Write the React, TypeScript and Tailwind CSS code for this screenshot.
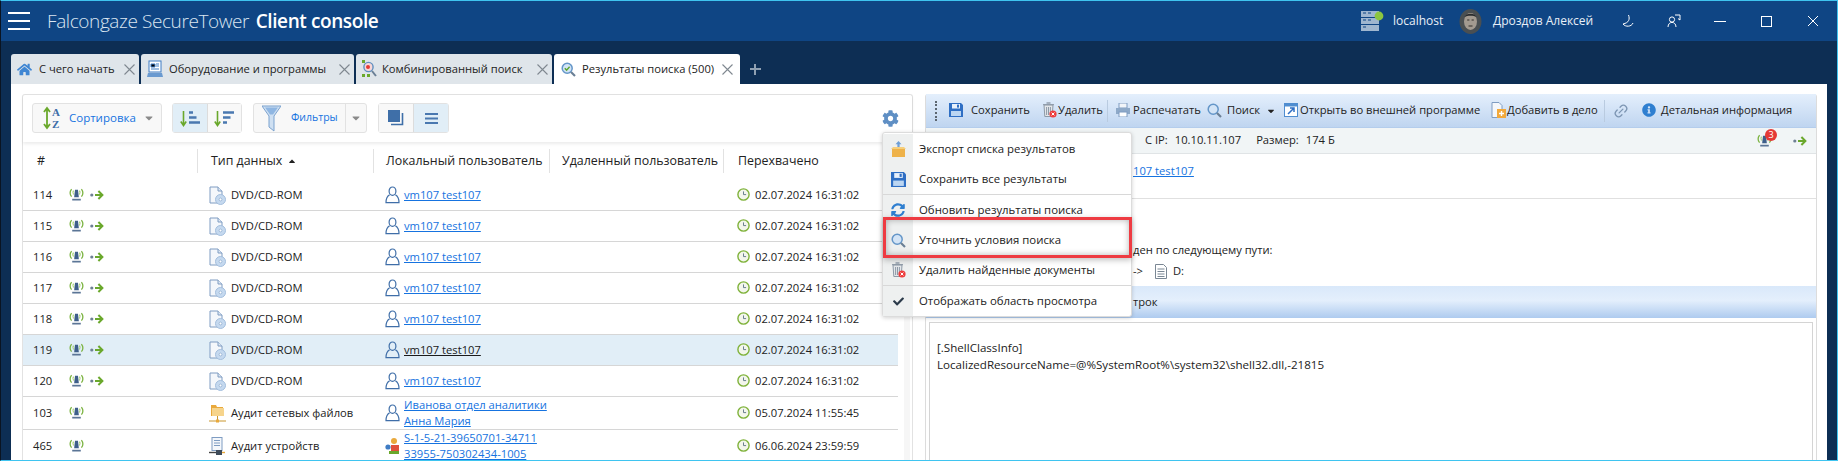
import React from 'react';
import { FaCog, FaHome, FaSyncAlt, FaCheck, FaInfoCircle, FaCaretDown, FaCaretUp } from 'react-icons/fa';
import { Link2 } from 'lucide-react';

const Beacon = () => (
  <svg width="15" height="15" viewBox="0 0 14 14" fill="none">
    <path d="M2.4 2C.7 4.2.7 6.8 2.4 9M11.6 2c1.7 2.2 1.7 4.8 0 7" stroke="#7cb342" strokeWidth="1.2" />
    <path d="M4.2 3.4C3.5 4.4 3.5 6 4.2 7M9.8 3.4c.7 1 .7 2.6 0 3.6" stroke="#9ccc65" strokeWidth="1" />
    <path d="M5.6 2.5h2.8l.8 7H4.8z" fill="#3e5f8a" />
    <rect x="3" y="11" width="8" height="1.6" fill="#5b7596" />
  </svg>
);

const DotArrow = () => (
  <svg width="14" height="12" viewBox="0 0 14 12" fill="none">
    <circle cx="1.8" cy="6" r="1.6" fill="#6d7f94" />
    <path d="M5 6h7M8.4 2l4 4-4 4" stroke="#6aa82c" strokeWidth="2" />
  </svg>
);

const DiscDoc = () => (
  <svg width="17" height="19" viewBox="0 0 17 19" fill="none">
    <path d="M1 1h8l4 4v12H1z" fill="#f4f7fb" stroke="#7e9cc2" />
    <path d="M9 1v4h4" stroke="#7e9cc2" fill="#dfe8f3" />
    <circle cx="11.5" cy="13.5" r="5" fill="#c5d9ef" stroke="#a3bedd" />
    <circle cx="11.5" cy="13.5" r="1.4" fill="#fff" stroke="#86a6cb" strokeWidth=".7" />
  </svg>
);

const UserIcon = () => (
  <svg width="15" height="18" viewBox="0 0 15 18" fill="none" stroke="#3f6ea8" strokeWidth="1.2">
    <ellipse cx="7.5" cy="5.2" rx="3.4" ry="4.2" />
    <path d="M4.6 8.8C2.4 10 1 12.2 1 16.6h13c0-4.4-1.4-6.6-3.6-7.8" />
  </svg>
);

const Clock = () => (
  <svg width="13" height="13" viewBox="0 0 13 13" fill="none">
    <circle cx="6.5" cy="6.5" r="5.6" fill="#f3f6ec" stroke="#7fb23a" strokeWidth="1.4" />
    <path d="M6.5 3.4v3.2h2.6" stroke="#6a7f8f" strokeWidth="1" />
  </svg>
);

const Floppy = ({ size = 14 }: { size?: number }) => (
  <svg width={size} height={size} viewBox="0 0 14 14">
    <path d="M0 0h12l2 2v12H0z" fill="#2f6fc4" />
    <rect x="3" y="1" width="8" height="4.5" fill="#e8f1fb" />
    <rect x="8" y="1.6" width="2" height="3" fill="#2f6fc4" />
    <rect x="2" y="8" width="10" height="5" fill="#bcd6f2" />
  </svg>
);

const TrashX = () => (
  <svg width="15" height="16" viewBox="0 0 15 16" fill="none">
    <path d="M2 3h9l-.8 11.5H2.8z" fill="#e4e7ea" stroke="#8d99a6" />
    <path d="M1 2.6h11M4.6 5v8M6.5 5v8M8.4 5v8" stroke="#8d99a6" />
    <path d="M4.5 1h4" stroke="#8d99a6" strokeWidth="1.4" />
    <circle cx="11" cy="12" r="3.6" fill="#ee3d3d" />
    <path d="M9.6 10.6l2.8 2.8M12.4 10.6l-2.8 2.8" stroke="#fff" strokeWidth="1" />
  </svg>
);

const Magnifier = ({ check = false }: { check?: boolean }) => (
  <svg width="15" height="15" viewBox="0 0 15 15" fill="none">
    <circle cx="6.2" cy="6.2" r="5" fill="#d3e4f6" stroke="#6496c8" strokeWidth="1.5" />
    <path d="M10 10l4 4" stroke="#6a7f95" strokeWidth="2.2" />
    {check && <path d="M3.8 6.2l1.8 1.9 3-3.4" stroke="#5aa62e" strokeWidth="1.4" />}
  </svg>
);

const BoxUp = () => (
  <svg width="15" height="17" viewBox="0 0 15 17">
    <path d="M7.5 0l3 3.2H8.6V8H6.4V3.2H4.5z" fill="#6f9fd6" />
    <path d="M0 8l2-2h11l2 2z" fill="#f6cf7c" />
    <rect x="1" y="8" width="13" height="8" fill="#eeb24a" />
  </svg>
);

const SortAZ = () => (
  <svg width="18" height="24" viewBox="0 0 18 24" fill="none">
    <path d="M4 3v18M1 6l3-4 3 4M1 18l3 4 3-4" stroke="#6aa82c" strokeWidth="1.8" />
    <text x="9" y="10" fontSize="11" fontWeight="700" fontFamily="'Liberation Serif', serif" fill="#3d6ea8">A</text>
    <text x="9" y="22" fontSize="11" fontWeight="700" fontFamily="'Liberation Serif', serif" fill="#3d6ea8">Z</text>
  </svg>
);

const OrderIcon = ({ reverse = false }: { reverse?: boolean }) => (
  <svg width="21" height="19" viewBox="0 0 21 19" fill="none">
    <path d="M3.5 2v14M.8 12.5l2.7 4 2.7-4" stroke="#6aa82c" strokeWidth="1.6" />
    {reverse ? (
      <path d="M9 3.5h11M9 8.5h7.5M9 13.5h4" stroke="#4a78b0" strokeWidth="2.6" />
    ) : (
      <path d="M9 3.5h4M9 8.5h7.5M9 13.5h11" stroke="#4a78b0" strokeWidth="2.6" />
    )}
  </svg>
);

const Funnel = () => (
  <svg width="19" height="27" viewBox="0 0 19 27">
    <path d="M0 1h19l-7 10v15l-5-4V11z" fill="#cfe0f2" stroke="#7ba2cf" />
    <path d="M3 2.5h13l-5 7H8z" fill="#8fb6e2" />
  </svg>
);

const Tool = ({ icon, label, className, labelClass }: { icon: React.ReactNode; label: string; className: string; labelClass: string }) => (
  <div className={`flex items-center shrink-0 ${className}`}>
    {icon}
    <span className={`whitespace-nowrap ${labelClass}`}>{label}</span>
  </div>
);

const tabs = [
  { label: 'С чего начать', width: 'w-[128px]', icon: <FaHome size={15} color="#3f86d3" />, text: 'ml-[7px]' },
  { label: 'Оборудование и программы', width: 'w-[213px]', icon: <svg width="16" height="18" viewBox="0 0 16 18"><rect x="2" y="1" width="12" height="11" fill="#fff" stroke="#3f7cc4" /><path d="M4 4h4v3H4zM9 4h3M9 6h3M4 9h8" stroke="#3f7cc4" /><path d="M1 13h14l1 4H0z" fill="#6a9ad0" /></svg>, text: 'ml-[6px]' },
  { label: 'Комбинированный поиск', width: 'w-[196px]', icon: <svg width="15" height="18" viewBox="0 0 15 18" fill="none"><rect x="0" y="0" width="3" height="3" fill="#6aa82c" /><rect x="0" y="14" width="3" height="3" fill="#6aa82c" /><rect x="5" y="14" width="3" height="3" fill="#6aa82c" /><circle cx="6.5" cy="7" r="4.6" fill="#f7d7d7" stroke="#5f8fc0" strokeWidth="1.4" /><circle cx="6" cy="7" r="2" fill="#e53935" /><path d="M10 11l4 5" stroke="#6a7f95" strokeWidth="2" /></svg>, text: 'ml-[5px]' },
];

const rows = [
  { id: 114 }, { id: 115 }, { id: 116 }, { id: 117 }, { id: 118 }, { id: 119, active: true }, { id: 120 },
];

const menu = [
  { label: 'Экспорт списка результатов', icon: <BoxUp /> },
  { label: 'Сохранить все результаты', icon: <Floppy size={15} /> },
  { label: 'Обновить результаты поиска', icon: <FaSyncAlt size={14} color="#2f7fd0" />, sep: true },
  { label: 'Уточнить условия поиска', icon: <Magnifier /> },
  { label: 'Удалить найденные документы', icon: <TrashX /> },
  { label: 'Отображать область просмотра', icon: <FaCheck size={11} color="#2b3a4a" />, sep: true },
];

const Row = ({ num, active, h, arrow, typeIcon, type, userIcon, user, date }: {
  num: number; active?: boolean; h: string; arrow?: boolean; typeIcon: React.ReactNode; type: string;
  userIcon: React.ReactNode; user: React.ReactNode; date: string;
}) => (
  <div className={`flex items-center border-b border-[#d6d6d6] ${h} ${active ? 'bg-[#e1eef7]' : ''}`}>
    <div className="w-[174px] pl-[10px] flex items-center">
      <span className="w-[36px]">{num}</span>
      <Beacon />
      {arrow && <span className="ml-[6px] flex"><DotArrow /></span>}
    </div>
    <div className="w-[176px] pl-[12px] flex items-center gap-[5px]">
      {typeIcon}
      <span>{type}</span>
    </div>
    <div className="w-[350px] pl-[12px] flex items-center gap-[4px]">
      {userIcon}
      <span className={`underline leading-[16px] ${active ? 'text-[#1a1a1a]' : 'text-[#1673e0]'}`}>{user}</span>
    </div>
    <div className="pl-[14px] flex items-center gap-[5px]">
      <Clock />
      <span>{date}</span>
    </div>
  </div>
);

export default function App() {
  return (
    <div className="relative w-[1838px] h-[461px] overflow-hidden flex flex-col bg-[#0d2e54] border-t border-b border-r border-l border-t-[#3fc4f0] border-b-[#3fc4f0] border-r-[#3fc4f0] border-l-[#0a1422] font-['Open_Sans',sans-serif] text-[11.2px] text-[#222]">
      {/* Title bar */}
      <header className="h-[40px] shrink-0 bg-[#0f4584] flex items-center text-white">
        <div className="ml-[7px] w-[22px] flex flex-col gap-[6px]">
          <div className="h-[2px] bg-white" />
          <div className="h-[2px] bg-white" />
          <div className="h-[2px] bg-white" />
        </div>
        <h1 className="ml-[17px] text-[19px] font-light tracking-[-0.4px] text-[#dbe6f2] whitespace-nowrap">
          Falcongaze SecureTower <span className="font-semibold text-white ml-[2px]">Client console</span>
        </h1>
        <div className="ml-auto flex items-center text-[12px] text-[#e8eff7]">
          <svg width="23" height="22" viewBox="0 0 23 22">
            <rect x="0" y="1" width="18" height="6" fill="#9fb6cf" />
            <rect x="0" y="8" width="18" height="6" fill="#9fb6cf" />
            <rect x="0" y="15" width="18" height="6" fill="#9fb6cf" />
            <path d="M2 3h3M7 3h3M2 10h3M7 10h3M2 17h3" stroke="#0f4584" strokeWidth="1.2" />
            <circle cx="18" cy="6" r="4.4" fill="#8cc63f" />
          </svg>
          <span className="ml-[9px] w-[48px]">localhost</span>
          <svg className="ml-[18px]" width="23" height="25" viewBox="0 0 23 25">
            <ellipse cx="11.5" cy="12.5" rx="11" ry="12.5" fill="#4a4f52" />
            <ellipse cx="11.5" cy="12.5" rx="6.5" ry="8.5" fill="#a39a90" />
            <path d="M5.5 8c1-4.5 11-4.5 12 0-3-1.6-9-1.6-12 0z" fill="#2a2c2e" />
            <path d="M8.2 11h2.2M12.6 11h2.2M9.5 17h4" stroke="#332e2b" />
          </svg>
          <span className="ml-[11px] w-[96px] whitespace-nowrap">Дроздов Алексей</span>
          <svg className="ml-[33px]" width="12" height="14" viewBox="0 0 12 14" fill="none" stroke="#fff"><path d="M6.5 1c1.6 4.2.4 7.800-5.500 9 2.500 3.300 8.500 2.800 10-1" /></svg>
          <svg className="ml-[33px]" width="14" height="14" viewBox="0 0 14 14" fill="none" stroke="#fff"><circle cx="5" cy="5.5" r="2.6" /><path d="M1 13c0-3 2-4.6 4-4.6s4 1.600 4 4.600M8 1h5v5l-2-1.400" /></svg>
          <div className="ml-[33px] w-[12px] h-px bg-white" />
          <div className="ml-[35px] w-[11px] h-[11px] border border-white" />
          <svg className="ml-[35px] mr-[18px]" width="12" height="12" viewBox="0 0 12 12" stroke="#fff"><path d="M1 1l10 10M11 1L1 11" /></svg>
        </div>
      </header>

      {/* Tabs */}
      <nav className="h-[43px] shrink-0 pt-[13px] pl-[10px] flex items-stretch gap-[2px]">
        {tabs.map((t) => (
          <div key={t.label} className={`flex items-center bg-[#dfe5ea] rounded-t-[3px] pl-[6px] pr-[4px] ${t.width}`}>
            {t.icon}
            <span className={`${t.text} whitespace-nowrap`}>{t.label}</span>
            <svg className="ml-auto" width="11" height="11" viewBox="0 0 11 11" stroke="#7f8890" strokeWidth="1.1"><path d="M.5.5l10 10M10.5.5l-10 10" /></svg>
          </div>
        ))}
        <div className="flex items-center bg-white rounded-t-[3px] w-[186px] pl-[7px] pr-[7px]">
          <Magnifier check />
          <span className="ml-[6px] whitespace-nowrap">Результаты поиска (500)</span>
          <svg className="ml-auto" width="11" height="11" viewBox="0 0 11 11" stroke="#7f8890" strokeWidth="1.1"><path d="M.5.5l10 10M10.5.5l-10 10" /></svg>
        </div>
        <div className="ml-[8px] self-center w-[11px] h-[11px] relative">
          <div className="absolute left-[4px] top-0 w-[2px] h-[11px] bg-[#8fa0b2]" />
          <div className="absolute left-0 top-[4px] w-[11px] h-[2px] bg-[#8fa0b2]" />
        </div>
      </nav>

      {/* Content */}
      <div className="flex-1 min-h-0 ml-[10px] mr-[10px] bg-white pt-[10px] pl-[11px] flex gap-[12px] relative">
        <section className="w-[891px] border-t border-l border-r border-[#e2e2e2] rounded-t-[3px] flex flex-col">
          <div className="h-[47px] shrink-0 shadow-[0_2px_3px_rgba(0,0,0,0.08)] pt-[8px] pl-[9px] pr-[13px] flex items-start">
            <div className="h-[30px] w-[130px] border border-[#e2e2e2] rounded-[3px] bg-[#f8f8f8] flex items-center pl-[10px] text-[#1673e0]">
              <SortAZ />
              <span className="ml-[8px] text-[11.5px]">Сортировка</span>
              <FaCaretDown className="ml-auto mr-[6px]" size={12} color="#8a8a8a" />
            </div>
            <div className="ml-[10px] h-[30px] w-[70px] border border-[#e2e2e2] rounded-[3px] flex">
              <div className="w-[35px] bg-[#e1eef7] border-r border-[#dcdcdc] flex items-center justify-center"><OrderIcon /></div>
              <div className="flex-1 bg-[#f8f8f8] flex items-center justify-center"><OrderIcon reverse /></div>
            </div>
            <div className="ml-[11px] h-[30px] w-[114px] border border-[#e2e2e2] rounded-[3px] flex bg-[#f8f8f8]">
              <div className="w-[92px] border-r border-[#e2e2e2] flex items-center pl-[8px] text-[#1673e0]">
                <Funnel />
                <span className="ml-[10px] text-[10.5px]">Фильтры</span>
              </div>
              <div className="flex-1 flex items-center justify-center"><FaCaretDown size={12} color="#8a8a8a" /></div>
            </div>
            <div className="ml-[11px] h-[30px] w-[71px] border border-[#e2e2e2] rounded-[3px] flex">
              <div className="w-[35px] bg-[#f8f8f8] border-r border-[#dcdcdc] flex items-center justify-center">
                <svg width="16" height="16" viewBox="0 0 16 16"><rect x="0" y="0" width="12" height="12" fill="#3f6fa8" /><path d="M14.5 3v11.5H3" fill="none" stroke="#3f6fa8" strokeWidth="1.6" /></svg>
              </div>
              <div className="flex-1 bg-[#e1eef7] flex items-center justify-center">
                <svg width="13" height="13" viewBox="0 0 13 13"><path d="M0 2h13M0 6.5h13M0 11h13" stroke="#4a78b0" strokeWidth="2" /></svg>
              </div>
            </div>
            <FaCog className="ml-auto mt-[7px]" size={17} color="#5f8fc4" />
          </div>

          <div className="flex h-[38px] shrink-0 items-center text-[12.4px] text-[#222] w-[875px]">
            <div className="w-[174px] pl-[14px]">#</div>
            <div className="w-[176px] h-[24px] border-l border-[#e2e2e2] pl-[13px] flex items-center gap-[5px]">
              Тип данных <FaCaretUp size={10} color="#222" />
            </div>
            <div className="w-[176px] h-[24px] border-l border-[#e2e2e2] pl-[12px] flex items-center whitespace-nowrap">Локальный пользователь</div>
            <div className="w-[174px] h-[24px] border-l border-[#e2e2e2] pl-[12px] flex items-center whitespace-nowrap">Удаленный пользователь</div>
            <div className="flex-1 h-[24px] border-l border-[#e2e2e2] pl-[14px] flex items-center">Перехвачено</div>
          </div>

          <div className="flex flex-1 min-h-0">
            <div className="w-[875px] shrink-0">
              {rows.map((r) => (
                <Row key={r.id} num={r.id} active={r.active} h="h-[31px]" arrow typeIcon={<DiscDoc />} type="DVD/CD-ROM" userIcon={<UserIcon />} user="vm107 test107" date="02.07.2024 16:31:02" />
              ))}
              <Row
                num={103}
                h="h-[33px]"
                typeIcon={
                  <svg width="17" height="19" viewBox="0 0 17 19"><path d="M2 1h5l1 2h6v9H2z" fill="#e9a93c" /><rect x="3" y="4" width="12" height="8" fill="#f6d48c" /><path d="M0 17h17M8.500 12v5" stroke="#c9962f" /><rect x="7" y="15.500" width="3" height="3" fill="#e9a93c" /></svg>
                }
                type="Аудит сетевых файлов"
                userIcon={<UserIcon />}
                user={<>Иванова отдел аналитики<br />Анна Мария</>}
                date="05.07.2024 11:55:45"
              />
              <Row
                num={465}
                h="h-[33px]"
                typeIcon={
                  <svg width="17" height="19" viewBox="0 0 17 19" fill="none"><rect x="3" y="0.5" width="10" height="13" fill="#f4f7fb" stroke="#7e9cc2" /><path d="M5 3.5h6M5 6h6M5 8.5h6" stroke="#7e9cc2" /><path d="M0 15.5h7" stroke="#444" strokeWidth="1.4" /><rect x="7" y="13" width="6" height="5" fill="#3d4a58" /><path d="M13 15.5h3" stroke="#e9a93c" strokeWidth="1.4" /></svg>
                }
                type="Аудит устройств"
                userIcon={
                  <svg width="15" height="18" viewBox="0 0 15 18"><circle cx="3" cy="10" r="2.6" fill="#3f7cc4" /><circle cx="9" cy="4" r="3" fill="#e9a93c" /><path d="M6 8h8v6H6z" fill="#e0503c" /><path d="M4 14h10v3H4z" fill="#6aa82c" /></svg>
                }
                user={<>S-1-5-21-39650701-34711<br />33955-750302434-1005</>}
                date="06.06.2024 23:59:59"
              />
            </div>
            <div className="ml-[6px] w-[6px] bg-[#f6f6f6]" />
          </div>
        </section>

        <section className="flex-1 mr-[10px] border-l border-r border-[#dcdcdc] rounded-t-[3px] flex flex-col">
          <div className="h-[34px] shrink-0 bg-gradient-to-b from-[#e4effc] to-[#bfd5f0] border-b border-[#b4cdec] flex items-center">
            <div className="ml-[9px] h-[20px] w-[2px] border-l-2 border-dotted border-[#5c6670]" />
            <Tool className="ml-[12px] gap-[8px]" labelClass="w-[57px]" label="Сохранить" icon={<Floppy />} />
            <Tool className="ml-[14px] gap-[1px]" labelClass="w-[44px]" label="Удалить" icon={<TrashX />} />
            <div className="ml-[5px] h-[22px] border-l border-[#b9cbe0]" />
            <Tool className="ml-[8px] gap-[3px]" labelClass="w-[66px]" label="Распечатать" icon={<svg width="14" height="14" viewBox="0 0 14 14"><rect x="3" y="0" width="8" height="5" fill="#f2f5f9" stroke="#7e9cc2" /><rect x="0" y="5" width="14" height="6" fill="#8ea9c8" /><rect x="3" y="9" width="8" height="5" fill="#fff" stroke="#7e9cc2" /></svg>} />
            <Tool className="ml-[8px] gap-[5px]" labelClass="w-[35px]" label="Поиск" icon={<Magnifier />} />
            <FaCaretDown className="ml-[4px]" size={10} color="#222" />
            <Tool className="ml-[8px] gap-[2px]" labelClass="w-[180px]" label="Открыть во внешней программе" icon={<svg width="14" height="14" viewBox="0 0 14 14" fill="none"><rect x=".5" y=".5" width="13" height="13" fill="#fff" stroke="#4f8dd0" /><rect x="1" y="1" width="12" height="2.5" fill="#4f8dd0" /><path d="M4 11l6-6M6 5h4v4" stroke="#2f6fc4" strokeWidth="1.5" /></svg>} />
            <Tool className="ml-[11px] gap-[1px]" labelClass="w-[92px]" label="Добавить в дело" icon={<svg width="15" height="16" viewBox="0 0 15 16"><path d="M1 .5h7l3 3v12H1z" fill="#f4f7fb" stroke="#7e9cc2" /><rect x="6" y="7" width="9" height="9" fill="#f2a93b" /><path d="M10.5 9v5M8 11.5h5" stroke="#fff" strokeWidth="1.4" /></svg>} />
            <div className="ml-[5px] h-[22px] border-l border-[#b9cbe0]" />
            <Link2 className="ml-[8px] -rotate-45" size={16} color="#7d96b3" />
            <Tool className="ml-[13px] gap-[5px]" labelClass="w-[132px]" label="Детальная информация" icon={<FaInfoCircle size={14} color="#2f7fd0" />} />
          </div>

          <div className="h-[26px] shrink-0 bg-[#f1f5f6] border-b border-[#e0e4e6] flex items-center pl-[219px] pr-[9px]">
            <span>С IP:</span>
            <span className="ml-[7px]">10.10.11.107</span>
            <span className="ml-[15px]">Размер:</span>
            <span className="ml-[7px]">174 Б</span>
            <div className="ml-auto flex items-center relative">
              <Beacon />
              <span className="absolute left-[8px] -top-[4px] w-[12px] h-[12px] rounded-full bg-[#e53935] text-white text-[9px] leading-[12px] text-center">3</span>
              <span className="ml-[21px] flex"><DotArrow /></span>
            </div>
          </div>

          {/* the part of these lines under the menu is not visible in the shot */}
          <div className="h-[45px] shrink-0 border-b border-[#e0e0e0] pl-[207px] pt-[9px]">
            <span className="underline text-[#1673e0]">107 test107</span>
          </div>

          <div className="h-[87px] shrink-0 flex flex-col justify-end pb-[6px] pl-[207px]">
            <div className="leading-[16px]">ден по следующему пути:</div>
            <div className="mt-[5px] flex items-center">
              <span className="w-[22px]">-&gt;</span>
              <svg width="12" height="15" viewBox="0 0 12 15" fill="none" stroke="#7a8794"><path d="M.5.5h8l3 3v11H.5z" /><path d="M2.5 5h7M2.5 7.5h7M2.5 10h7M2.5 12.5h7" /></svg>
              <span className="ml-[6px]">D:</span>
            </div>
          </div>

          <div className="h-[32px] shrink-0 bg-[linear-gradient(180deg,#d9e8fa_0%,#e4effc_45%,#aecbef_100%)] flex items-center pl-[207px]">
            трок
          </div>

          <div className="flex-1 min-h-0 mt-[4px] mx-[3px] border-t border-l border-r border-[#d4d4d4] pt-[16px] pl-[7px] text-[11.6px] leading-[17px]">
            <div>[.ShellClassInfo]</div>
            <div>LocalizedResourceName=@%SystemRoot%\system32\shell32.dll,-21815</div>
          </div>
        </section>

        {/* Context menu */}
        <div className="absolute left-[871px] top-[48px] w-[250px] rounded-[3px] border border-[#dcdcdc] bg-white shadow-[0_1px_4px_rgba(0,0,0,0.18)] pt-[1px] text-[11.4px]">
          {menu.map((m) => (
            <div key={m.label} className={`flex items-stretch ${m.sep ? 'h-[31px] border-t border-[#d8d8d8]' : 'h-[30px]'}`}>
              <div className="w-[30px] bg-[#eef0f0] flex items-center justify-center shrink-0">{m.icon}</div>
              <div className="pl-[6px] flex items-center whitespace-nowrap">{m.label}</div>
            </div>
          ))}
          <div className="absolute left-0 top-[84px] w-[249px] h-[41px] border-[3px] border-[#ee3b42] shadow-[inset_0_0_6px_rgba(0,0,0,0.3),0_2px_6px_rgba(0,0,0,0.25)]" />
        </div>
      </div>
    </div>
  );
}
